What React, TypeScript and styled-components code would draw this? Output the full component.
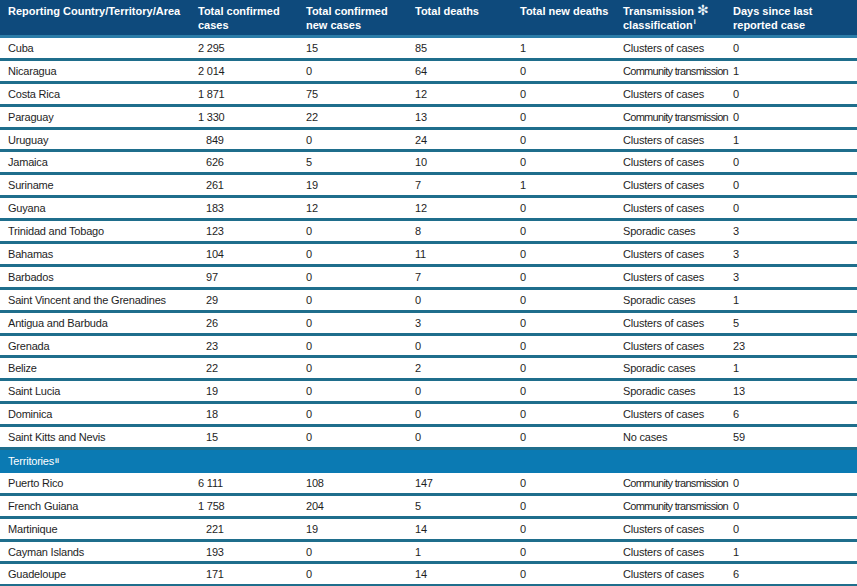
import React from 'react';
import styled, { createGlobalStyle } from 'styled-components';

const GlobalStyle = createGlobalStyle`
  html, body {
    margin: 0;
    padding: 0;
    background: #ffffff;
  }
  body {
    font-family: "Liberation Sans", Arial, sans-serif;
    color: #1e1e1e;
  }
`;

const COLUMNS = '190px 108px 109px 105px 103px 110px 1fr';

const Table = styled.div`
  width: 857px;
  height: 586px;
  overflow: hidden;
`;

const HeaderRow = styled.div`
  display: grid;
  grid-template-columns: ${COLUMNS};
  height: 35px;
  background: #0e4a7c;
  border-bottom: 3px solid #2b7ca8;
  color: #ffffff;
  font-weight: 700;
  font-size: 11px;
  line-height: 14px;
`;

const HeadCell = styled.div`
  padding: 4px 0 0 8px;
  white-space: nowrap;
`;

const Star = styled.span`
  font-family: "DejaVu Sans", sans-serif;
  font-size: 14px;
  line-height: 0;
  font-weight: 700;
  color: #e8f2fa;
  margin-left: 3px;
`;

const Sup = styled.sup`
  font-size: 7px;
  font-weight: 700;
  line-height: 0;
  vertical-align: 5px;
  margin-left: 1px;
  letter-spacing: 0;
`;

const Row = styled.div`
  display: grid;
  grid-template-columns: ${COLUMNS};
  align-items: center;
  height: 19.9px;
  border-bottom: 3px solid #1f6e8c;
  font-size: 11px;
  letter-spacing: -0.2px;
`;

const SectionRow = styled.div`
  height: 22.9px;
  display: flex;
  align-items: center;
  padding-left: 8px;
  background: #0b7ab3;
  color: #ffffff;
  font-size: 11px;
  letter-spacing: -0.2px;
`;

const Cell = styled.div<{ $indent?: boolean; $tight?: boolean }>`
  padding-left: ${(p) => (p.$indent ? 16 : 8)}px;
  white-space: nowrap;
  letter-spacing: ${(p) => (p.$tight ? '-0.7px' : 'inherit')};
`;

type Entry = [string, number, number, number, number, string, number];

const countries: Entry[] = [
  ['Cuba', 2295, 15, 85, 1, 'Clusters of cases', 0],
  ['Nicaragua', 2014, 0, 64, 0, 'Community transmission', 1],
  ['Costa Rica', 1871, 75, 12, 0, 'Clusters of cases', 0],
  ['Paraguay', 1330, 22, 13, 0, 'Community transmission', 0],
  ['Uruguay', 849, 0, 24, 0, 'Clusters of cases', 1],
  ['Jamaica', 626, 5, 10, 0, 'Clusters of cases', 0],
  ['Suriname', 261, 19, 7, 1, 'Clusters of cases', 0],
  ['Guyana', 183, 12, 12, 0, 'Clusters of cases', 0],
  ['Trinidad and Tobago', 123, 0, 8, 0, 'Sporadic cases', 3],
  ['Bahamas', 104, 0, 11, 0, 'Clusters of cases', 3],
  ['Barbados', 97, 0, 7, 0, 'Clusters of cases', 3],
  ['Saint Vincent and the Grenadines', 29, 0, 0, 0, 'Sporadic cases', 1],
  ['Antigua and Barbuda', 26, 0, 3, 0, 'Clusters of cases', 5],
  ['Grenada', 23, 0, 0, 0, 'Clusters of cases', 23],
  ['Belize', 22, 0, 2, 0, 'Sporadic cases', 1],
  ['Saint Lucia', 19, 0, 0, 0, 'Sporadic cases', 13],
  ['Dominica', 18, 0, 0, 0, 'Clusters of cases', 6],
  ['Saint Kitts and Nevis', 15, 0, 0, 0, 'No cases', 59],
];

const territories: Entry[] = [
  ['Puerto Rico', 6111, 108, 147, 0, 'Community transmission', 0],
  ['French Guiana', 1758, 204, 5, 0, 'Community transmission', 0],
  ['Martinique', 221, 19, 14, 0, 'Clusters of cases', 0],
  ['Cayman Islands', 193, 0, 1, 0, 'Clusters of cases', 1],
  ['Guadeloupe', 171, 0, 14, 0, 'Clusters of cases', 6],
];

// thousands separated by a space, as in the report
const fmt = (n: number) => n.toString().replace(/\B(?=(\d{3})+(?!\d))/g, ' ');

function DataRow({ e }: { e: Entry }) {
  return (
    <Row>
      <Cell>{e[0]}</Cell>
      <Cell $indent={e[1] < 1000}>{fmt(e[1])}</Cell>
      <Cell>{e[2]}</Cell>
      <Cell>{e[3]}</Cell>
      <Cell>{e[4]}</Cell>
      <Cell $tight={e[5].length > 18}>{e[5]}</Cell>
      <Cell>{e[6]}</Cell>
    </Row>
  );
}

export default function App() {
  return (
    <>
      <GlobalStyle />
      <Table>
        <HeaderRow>
          <HeadCell>Reporting Country/Territory/Area</HeadCell>
          <HeadCell>
            Total confirmed
            <br />
            cases
          </HeadCell>
          <HeadCell>
            Total confirmed
            <br />
            new cases
          </HeadCell>
          <HeadCell>Total deaths</HeadCell>
          <HeadCell>Total new deaths</HeadCell>
          <HeadCell>
            Transmission<Star>✻</Star>
            <br />
            classification<Sup>i</Sup>
          </HeadCell>
          <HeadCell>
            Days since last
            <br />
            reported case
          </HeadCell>
        </HeaderRow>
        {countries.map((e) => (
          <DataRow key={e[0]} e={e} />
        ))}
        <SectionRow>
          Territories<Sup>ii</Sup>
        </SectionRow>
        {territories.map((e) => (
          <DataRow key={e[0]} e={e} />
        ))}
      </Table>
    </>
  );
}
